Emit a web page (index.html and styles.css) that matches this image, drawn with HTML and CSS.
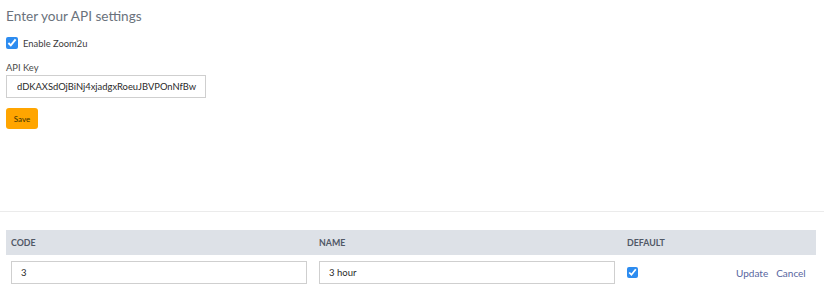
FILE: index.html
```html
<!DOCTYPE html>
<html lang="en">
<head>
  <meta charset="UTF-8">
  <title>API settings</title>
  <link rel="stylesheet" href="styles.css">
</head>
<body>
  <section class="settings">
    <h2>Enter your API settings</h2>
    <label class="check-row">
      <input type="checkbox" checked>
      <span>Enable Zoom2u</span>
    </label>
    <label class="field-label" for="apiKey">API Key</label>
    <input class="api-input" id="apiKey" type="text" value="dDKAXSdOjBiNj4xjadgxRoeuJBVPOnNfBw">
    <button class="save-btn">Save</button>
  </section>

  <div class="table-wrap">
    <div class="grid-head">
      <div class="cell">CODE</div>
      <div class="cell">NAME</div>
      <div class="cell">DEFAULT</div>
      <div class="cell"></div>
    </div>
    <div class="grid-row">
      <div class="cell"><input class="cell-input" type="text" value="3"></div>
      <div class="cell"><input class="cell-input" type="text" value="3 hour"></div>
      <div class="cell"><input class="row-check" type="checkbox" checked></div>
      <div class="cell actions">
        <a href="#">Update</a>
        <a href="#">Cancel</a>
      </div>
    </div>
  </div>
</body>
</html>
```

FILE: styles.css
```css
/* Reset */
*, *::before, *::after { box-sizing: border-box; }
body {
  margin: 0;
  font-family: Lato, 'Open Sans', sans-serif;
  color: #333;
  background: #fff;
}
/* API settings block */
.settings {
  height: 212px;
  padding: 6px 6px 0;
  border-bottom: 1px solid #ebebeb;
}
.settings h2 {
  margin: 0 0 10px;
  font-size: 13.6px;
  font-weight: normal;
  color: #6a727c;
  line-height: 20px;
}
.check-row {
  display: flex;
  align-items: center;
  gap: 5px;
  font-size: 9.4px;
  color: #3c3c3c;
  height: 14px;
}
.check-row input {
  margin: 0;
  width: 12px;
  height: 12px;
  accent-color: #2d8cf0;
}
.field-label {
  display: block;
  margin-top: 11px;
  font-size: 9.4px;
  color: #4a4a4a;
  line-height: 14px;
}
.api-input {
  display: block;
  width: 200px;
  height: 23px;
  margin-top: 0;
  padding: 0 3px 0 10px;
  border: 1px solid #cfcfcf;
  font-family: inherit;
  font-size: 9.4px;
  color: #2a2a2a;
  outline: none;
}
.save-btn {
  display: block;
  margin-top: 10px;
  width: 32px;
  height: 21px;
  padding: 0;
  border: none;
  border-radius: 3px;
  background: #ffa500;
  color: #3a3000;
  font-family: inherit;
  font-size: 8px;
  cursor: pointer;
}
/* Code table */
.table-wrap {
  padding: 18px 8px 0 6px;
}
.grid-head, .grid-row {
  display: grid;
  grid-template-columns: 308px 308px 108px 1fr;
}
.grid-head {
  height: 25px;
  align-items: center;
  background: #dde1e7;
  font-size: 8.8px;
  font-weight: bold;
  color: #505866;
}
.cell {
  padding: 0 5px;
}
.grid-row {
  padding-top: 6px;
  align-items: center;
}
.cell-input {
  display: block;
  width: 296px;
  height: 23px;
  padding: 0 9px;
  border: 1px solid #cfcfcf;
  font-family: inherit;
  font-size: 9.5px;
  color: #2a2a2a;
  outline: none;
}
.row-check {
  display: block;
  margin: 0;
  width: 11px;
  height: 11px;
  accent-color: #2d8cf0;
}
.actions {
  display: flex;
  gap: 8px;
  padding-left: 6px;
}
.actions a {
  font-size: 10px;
  color: #5766a0;
  text-decoration: none;
}
```
